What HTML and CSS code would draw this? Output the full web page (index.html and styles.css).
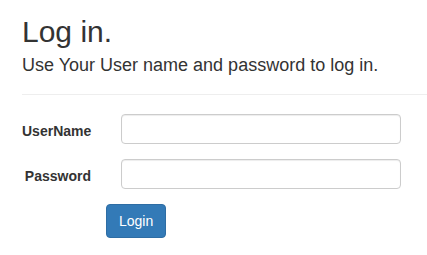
FILE: index.html
```html
<!DOCTYPE html>
<html>
<head>
<meta charset="utf-8">
<link rel="stylesheet" href="styles.css">
</head>
<body>
<div class="page">
  <h2 class="title">Log in.</h2>
  <h4 class="subtitle">Use Your User name and password to log in.</h4>
  <hr class="rule">
  <form class="login-form">
    <div class="form-group">
      <label class="control-label" for="user">UserName</label>
      <input class="form-control" id="user" type="text">
    </div>
    <div class="form-group">
      <label class="control-label" for="pass">Password</label>
      <input class="form-control" id="pass" type="password">
    </div>
    <div class="form-group">
      <span class="spacer"></span>
      <button class="btn-primary" type="button">Login</button>
    </div>
  </form>
</div>
</body>
</html>
```
FILE: styles.css
```css
html, body {
  margin: 0;
  padding: 0;
  background: #fff;
}
body {
  font-family: "Liberation Sans", Arial, sans-serif;
  font-size: 14px;
  line-height: 20px;
  color: #333;
}
.page {
  padding: 15px 0 0 22px;
}
.title {
  margin: 0;
  font-size: 30px;
  font-weight: 500;
  line-height: 33px;
}
.subtitle {
  margin: 7px 0 0;
  font-size: 18px;
  font-weight: 500;
  line-height: 20px;
}
.rule {
  margin: 19px 0 0;
  border: 0;
  border-top: 1px solid #eee;
  height: 0;
}
.login-form {
  margin-top: 19px;
}
.form-group {
  display: grid;
  grid-template-columns: 84px 295px;
  margin-bottom: 15px;
}
.control-label {
  padding: 7px 15px 0 0;
  text-align: right;
  font-weight: bold;
}
.form-control {
  margin: 0 0 0 15px;
  box-sizing: border-box;
  width: 280px;
  height: 30px;
  padding: 6px 12px;
  font: inherit;
  color: #555;
  background: #fff;
  border: 1px solid #ccc;
  border-radius: 4px;
  box-shadow: inset 0 1px 1px rgba(0,0,0,.075);
}
.btn-primary {
  justify-self: start;
  box-sizing: border-box;
  height: 34px;
  padding: 6px 12px;
  font: inherit;
  color: #fff;
  background: #337ab7;
  border: 1px solid #2e6da4;
  border-radius: 4px;
  cursor: pointer;
}
```
